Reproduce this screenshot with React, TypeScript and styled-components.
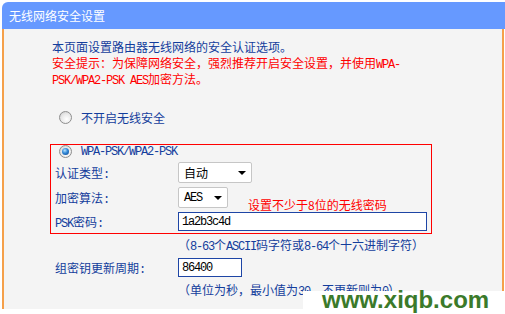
import React from "react";
import styled, { createGlobalStyle } from "styled-components";

const Global = createGlobalStyle`
  html, body { margin: 0; padding: 0; background: #ffffff; }
  body { font-family: "Noto Sans CJK SC", "Noto Sans", sans-serif; font-size: 12px; }
`;

const BLUE = "#133d9c";
const RED = "#ff0000";

const Page = styled.div`
  position: relative;
  width: 505px;
  height: 314px;
  overflow: hidden;
  padding-top: 2px;
  box-sizing: border-box;
`;

const Header = styled.div`
  margin-left: 2px;
  height: 27px;
  background: #6699ff;
  border-top-left-radius: 6px;
  color: #ffffff;
  font-size: 12px;
  line-height: 27px;
  padding-left: 7px;
`;

const Body = styled.div`
  margin-left: 2px;
  width: 502px;
  height: 280px;
  box-sizing: border-box;
  background: #f4f4f4;
  border-left: 2px solid #f5a04a;
  border-right: 2px solid #f5a04a;
  padding: 10px 0 0 46px;
  display: flex;
  flex-direction: column;
  align-items: flex-start;
  color: ${BLUE};
`;

const Intro = styled.div`
  padding-left: 2px;
  white-space: nowrap;
`;

const Line = styled.div<{ $warn?: boolean }>`
  height: 16px;
  line-height: 16px;
  color: ${(p) => (p.$warn ? RED : BLUE)};
`;

const Mono = styled.span`
  font-family: "Liberation Mono", "DejaVu Sans Mono", monospace;
  font-size: 12px;
  line-height: 1;
  letter-spacing: -1.2px;
`;

const RadioRow = styled.div<{ $h: number; $top: number; $left: number }>`
  display: flex;
  align-items: center;
  gap: 9px;
  height: ${(p) => p.$h}px;
  margin-top: ${(p) => p.$top}px;
  margin-left: ${(p) => p.$left}px;
  white-space: nowrap;
`;

const Radio = styled.span<{ $on?: boolean }>`
  position: relative;
  width: 11px;
  height: 11px;
  border-radius: 50%;
  border: 1px solid #8e8e8e;
  background: radial-gradient(circle at 60% 65%, #ffffff 0%, #e8e8e8 55%, #c4c4c4 100%);
  flex: none;
  &::after {
    content: "";
    display: ${(p) => (p.$on ? "block" : "none")};
    position: absolute;
    left: 2px;
    top: 2px;
    width: 7px;
    height: 7px;
    border-radius: 50%;
    background: radial-gradient(circle at 40% 35%, #b8e4ff 0%, #2f86d6 45%, #0b3f86 100%);
  }
`;

const RedBox = styled.div`
  margin-top: 19px;
  width: 382px;
  box-sizing: border-box;
  border: 1px solid ${RED};
  padding: 0 0 2px 4px;
  display: flex;
  flex-direction: column;
  gap: 4px;
`;

const Field = styled.div<{ $top?: number; $left?: number }>`
  display: grid;
  grid-template-columns: 123px auto;
  align-items: center;
  margin-top: ${(p) => p.$top ?? 0}px;
  margin-left: ${(p) => p.$left ?? 0}px;
  white-space: nowrap;
`;

const Label = styled.span`
  line-height: 16px;
`;

const Controls = styled.div`
  display: flex;
  align-items: flex-start;
`;

const Select = styled.div<{ $w: number }>`
  width: ${(p) => p.$w}px;
  height: 21px;
  box-sizing: border-box;
  border: 1px solid #c6c6c6;
  border-radius: 2px;
  background: #ffffff;
  color: #000000;
  display: flex;
  align-items: center;
  justify-content: space-between;
  padding: 0 5px 0 5px;
`;

const Arrow = styled.span`
  width: 0;
  height: 0;
  border-left: 4px solid transparent;
  border-right: 4px solid transparent;
  border-top: 4px solid #000000;
`;

const TextInput = styled.div<{ $w: number }>`
  width: ${(p) => p.$w}px;
  height: 19px;
  box-sizing: border-box;
  border: 1px solid #1e45a5;
  background: #ffffff;
  color: #000000;
  display: flex;
  align-items: center;
  padding-left: 3px;
`;

const Note = styled.span`
  color: ${RED};
  line-height: 16px;
  margin-left: 20px;
  margin-top: 10px;
  margin-bottom: -10px;
`;

const Hint = styled.div<{ $top: number }>`
  margin-left: 128px;
  margin-top: ${(p) => p.$top}px;
  height: 16px;
  line-height: 16px;
  white-space: nowrap;
`;

const Watermark = styled.div`
  position: absolute;
  left: 303px;
  top: 291px;
  right: 0;
  bottom: 0;
  background: #ffffff;
  padding-left: 19px;
  font-family: "Liberation Sans", Arial, sans-serif;
  font-weight: bold;
  font-size: 24px;
  line-height: 18px;
  color: #3b7a2a;
  white-space: nowrap;
`;

export default function App() {
  return (
    <Page>
      <Global />
      <Header>无线网络安全设置</Header>
      <Body>
        <Intro>
          <Line>本页面设置路由器无线网络的安全认证选项。</Line>
          <Line $warn>
            安全提示：为保障网络安全，强烈推荐开启安全设置，并使用<Mono>WPA-</Mono>
          </Line>
          <Line $warn>
            <Mono>PSK/WPA2-PSK AES</Mono>加密方法。
          </Line>
        </Intro>
        <RadioRow $h={16} $top={22} $left={9}>
          <Radio />
          <span>不开启无线安全</span>
        </RadioRow>
        <RedBox>
          <RadioRow $h={13} $top={0} $left={4}>
            <Radio $on />
            <Mono>WPA-PSK/WPA2-PSK</Mono>
          </RadioRow>
          <Field>
            <Label>
              认证类型<Mono>:</Mono>
            </Label>
            <Controls>
              <Select $w={74}>
                <span>自动</span>
                <Arrow />
              </Select>
            </Controls>
          </Field>
          <Field>
            <Label>
              加密算法<Mono>:</Mono>
            </Label>
            <Controls>
              <Select $w={50}>
                <Mono>AES</Mono>
                <Arrow />
              </Select>
              <Note>设置不少于8位的无线密码</Note>
            </Controls>
          </Field>
          <Field>
            <Label>
              <Mono>PSK</Mono>密码<Mono>:</Mono>
            </Label>
            <Controls>
              <TextInput $w={249}>
                <Mono>1a2b3c4d</Mono>
              </TextInput>
            </Controls>
          </Field>
        </RedBox>
        <Hint $top={3}>
          （<Mono>8-63</Mono>个<Mono>ASCII</Mono>码字符或<Mono>8-64</Mono>个十六进制字符）
        </Hint>
        <Field $top={5} $left={5}>
          <Label>
            组密钥更新周期<Mono>:</Mono>
          </Label>
          <Controls>
            <TextInput $w={64}>
              <Mono>86400</Mono>
            </TextInput>
          </Controls>
        </Field>
        <Hint $top={5}>
          （单位为秒，最小值为<Mono>30</Mono>，不更新则为<Mono>0</Mono>）
        </Hint>
      </Body>
      <Watermark>www.xiqb.com</Watermark>
    </Page>
  );
}
